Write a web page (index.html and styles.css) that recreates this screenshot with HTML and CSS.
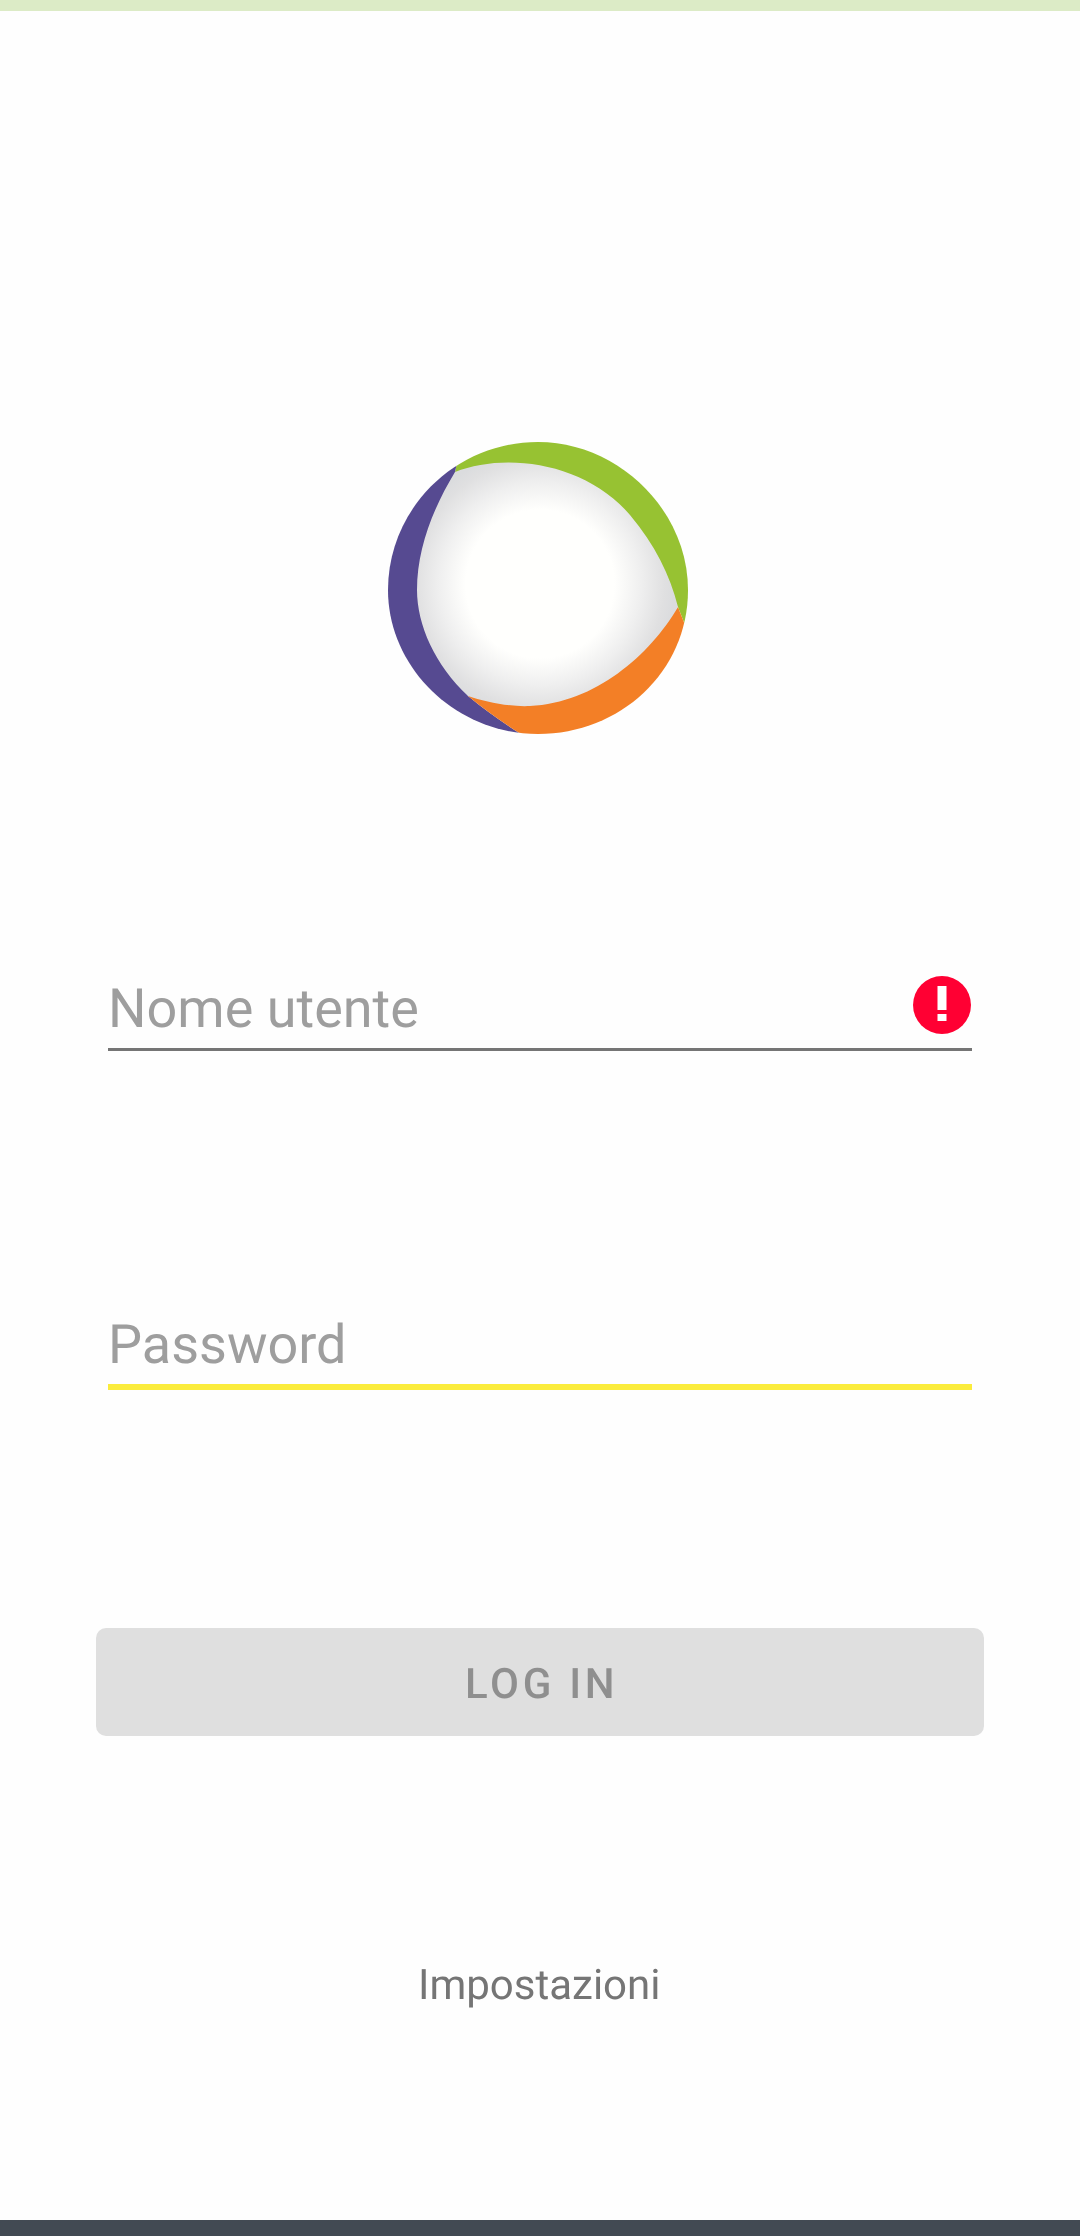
FILE: index.html
```html
<!DOCTYPE html>
<html lang="it">
<head>
<meta charset="utf-8">
<title>Login</title>
<link rel="stylesheet" href="styles.css">
</head>
<body>
<div class="screen">
  <div class="status-bar"></div>
  <div class="logo-wrap">
    <svg class="logo" viewBox="370 420 330 330" xmlns="http://www.w3.org/2000/svg">
      <defs>
        <clipPath id="disc"><path d="M538 442C618 442 688 510 688 590C688 672 620 734 538 734C456 734 388 668 388 590C388 508 456 442 538 442Z"/></clipPath>
        <radialGradient id="glow" gradientUnits="userSpaceOnUse" cx="540" cy="584" r="135">
          <stop offset="0" stop-color="#fffffd"/>
          <stop offset="0.55" stop-color="#fffffd"/>
          <stop offset="0.75" stop-color="#efefef"/>
          <stop offset="0.92" stop-color="#e0e0e1"/>
          <stop offset="1" stop-color="#dbdcde"/>
        </radialGradient>
      </defs>
      <g clip-path="url(#disc)">
        <path fill="#97c232" d="M457 463L455 472L678 607L685 625L700 625V420H457Z"/>
        <path fill="#564a91" d="M370 420H457V463L455 472L468 696Q492 716 524 736V750H370Z"/>
        <path fill="#f37f26" d="M468 696Q492 716 524 736V750H700V625L685 625L678 607Z"/>
        <path fill="url(#glow)" d="M455 472C505 452 585 462 630 515C655 545 670 575 678 607C650 655 595 703 530 706C510 707 485 702 468 696C435 665 417 625 417 590C417 550 432 510 455 472Z"/>
      </g>
    </svg>
  </div>
  <div class="field field-user">
    <span class="placeholder">Nome utente</span>
    <svg class="alert" viewBox="0 0 58 58" xmlns="http://www.w3.org/2000/svg">
      <circle cx="29" cy="29" r="29" fill="#ff0033"/>
      <rect x="24.5" y="10" width="9" height="24" fill="#fff"/>
      <rect x="24.5" y="38" width="9" height="7" fill="#fff"/>
    </svg>
  </div>
  <div class="field field-pass">
    <span class="placeholder">Password</span>
  </div>
  <div class="login-btn"><span class="label">LOG IN</span></div>
  <div class="settings"><span class="label">Impostazioni</span></div>
  <div class="nav-bar"></div>
</div>
</body>
</html>
```

FILE: styles.css
```css
html, body {
  margin: 0;
  padding: 0;
  background: #fefefe;
}

.screen {
  display: flex;
  flex-direction: column;
  width: 1080px;
  height: 2236px;
  overflow: hidden;
  font-family: Roboto, "Liberation Sans", sans-serif;
  text-rendering: geometricPrecision;
  background: #fefefe;
}

.status-bar {
  height: 11px;
  background: #dcebc6;
  flex: none;
}

.nav-bar {
  height: 16px;
  margin-top: auto;
  background: #424a53;
  flex: none;
}

.logo-wrap {
  display: flex;
  margin: 409px 0 0 370px;
}

.logo {
  width: 330px;
  height: 330px;
  display: block;
}

.field {
  display: flex;
  justify-content: space-between;
  align-items: flex-start;
  margin: 0 108px;
  padding-bottom: 6px;
}

.field-user {
  margin-top: 228px;
  border-bottom: 3px solid #757575;
}

.field-pass {
  margin-top: 263px;
  border-bottom: 6px solid #fbec3c;
}

.placeholder,
.label {
  will-change: transform;
}

.placeholder {
  font-size: 54px;
  line-height: 64px;
  color: #9e9e9e;
}

.alert {
  width: 58px;
  height: 58px;
  margin: -2px 1px 0 0;
  display: block;
  flex: none;
}

.login-btn {
  display: flex;
  align-items: center;
  justify-content: center;
  box-sizing: border-box;
  height: 108px;
  margin: 238px 96px 0;
  padding: 4px 0 0 4px;
  border-radius: 10px;
  background: #dfdfdf;
  color: #8f8f8f;
  font-size: 42px;
  font-weight: 500;
  letter-spacing: 3.7px;
}

.settings {
  display: flex;
  justify-content: center;
  margin-top: 225px;
  padding-right: 2px;
  font-size: 42px;
  line-height: 50px;
  color: #757575;
}
```
